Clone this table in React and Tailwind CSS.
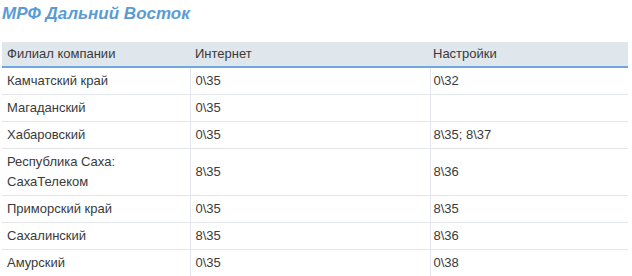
import React from 'react';

const rows = [
    { name: 'Камчатский край', net: '0\\35', cfg: '0\\32' },
    { name: 'Магаданский', net: '0\\35', cfg: '' },
    { name: 'Хабаровский', net: '0\\35', cfg: '8\\35; 8\\37' },
    { name: ['Республика Саха:', 'СахаТелеком'], net: '8\\35', cfg: '8\\36' },
    { name: 'Приморский край', net: '0\\35', cfg: '8\\35' },
    { name: 'Сахалинский', net: '8\\35', cfg: '8\\36' },
    { name: 'Амурский', net: '0\\35', cfg: '0\\38' },
];

function App() {
    return (
        <div className="bg-white w-[632px] h-[276px] overflow-hidden pl-[2px] pt-[3px] font-['Liberation_Sans',Arial,sans-serif] text-[13px] text-[#3a3a3a]">
            <h1 className="text-[17px] leading-[22px] font-bold italic text-[#5b9bd5]">МРФ Дальний Восток</h1>
            <table className="mt-[17px] w-[626px] border-collapse">
                <thead>
                    <tr className="bg-[#dfe6ec] border-b-2 border-[#6fa8dc]">
                        <th className="w-[188px] text-left font-normal px-[5px] py-[2px] leading-[20px]">Филиал компании</th>
                        <th className="w-[240px] text-left font-normal px-[5px] py-[2px] leading-[20px]">Интернет</th>
                        <th className="text-left font-normal px-[3px] py-[2px] leading-[20px]">Настройки</th>
                    </tr>
                </thead>
                <tbody>
                    {rows.map((r, i) => (
                        <tr key={i} className="border-b border-[#e3e7eb]">
                            <td className="px-[5px] py-[3px] leading-[20px] border-r border-[#e3e7eb]">
                                {Array.isArray(r.name) ? r.name.map((l, j) => <div key={j}>{l}</div>) : r.name}
                            </td>
                            <td className="px-[5px] py-[3px] leading-[20px] border-r border-[#e3e7eb]">{r.net}</td>
                            <td className="px-[3px] py-[3px] leading-[20px]">{r.cfg}</td>
                        </tr>
                    ))}
                </tbody>
            </table>
        </div>
    );
}

export default App;
